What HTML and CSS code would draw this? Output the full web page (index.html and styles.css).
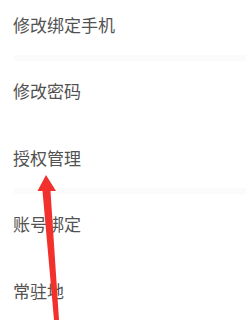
FILE: index.html
```html
<!DOCTYPE html>
<html lang="zh-CN">
<head>
  <meta charset="utf-8">
  <meta name="viewport" content="width=device-width, initial-scale=1">
  <title>账号与安全</title>
  <link rel="stylesheet" href="styles.css">
</head>
<body>
  <div class="settings">
    <div class="item">修改绑定手机</div>
    <div class="divider"></div>
    <div class="item">修改密码</div>
    <div class="item">授权管理</div>
    <div class="divider"></div>
    <div class="item">账号绑定</div>
    <div class="item">常驻地</div>
  </div>

  <svg class="arrow" width="246" height="320" viewBox="0 0 246 320">
    <polygon points="46,175 56,191 50.5,191 59,320 54,320 42.5,191 37.5,191" fill="#f2302c"/>
  </svg>
</body>
</html>
```

FILE: styles.css
```css
html, body {
  margin: 0;
  padding: 0;
  background: #fff;
  overflow: hidden;
}

body {
  position: relative;
  width: 246px;
  height: 320px;
  font-family: "Noto Sans CJK SC", "Noto Sans", sans-serif;
  color: #525252;
}

.settings {
  display: flex;
  flex-direction: column;
  margin-top: -9px;
}

.item {
  display: flex;
  align-items: center;
  height: 66.5px;
  padding-left: 13px;
  font-size: 17px;
  line-height: 1;
}

.divider {
  height: 6px;
  margin: -3px 0 -3px 14px;
  background: #fbfbfb;
}

.arrow {
  position: absolute;
  left: 0;
  top: 0;
}
```
